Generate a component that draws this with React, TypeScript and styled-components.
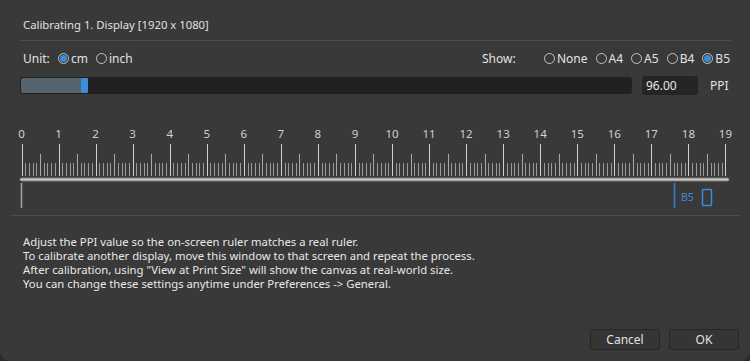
import React from "react";
import styled, { createGlobalStyle } from "styled-components";

const Global = createGlobalStyle`
  html, body { margin: 0; padding: 0; background: #2b2b2b; }
  body { font-family: "Noto Sans", "DejaVu Sans", sans-serif; }
`;

const Dialog = styled.div`
  width: 750px;
  height: 361px;
  background: #393939;
  border-radius: 0 0 10px 10px;
  display: flex;
  flex-direction: column;
  box-sizing: border-box;
  color: #e2e2e2;
  font-size: 12px;
  overflow: hidden;
`;

const Title = styled.div`
  margin: 17px 23px 0;
  line-height: 16px;
  font-size: 11.3px;
  color: #e0e0e0;
`;

const Separator = styled.div<{ $inset: number; $top: number }>`
  height: 1px;
  background: #4c4c4c;
  margin: ${(p) => p.$top}px ${(p) => p.$inset}px 0;
`;

const ControlsRow = styled.div`
  margin: 8px 20px 0 23px;
  height: 18px;
  display: flex;
  align-items: center;
`;

const Label = styled.span<{ $w?: number }>`
  width: ${(p) => (p.$w ? `${p.$w}px` : "auto")};
  flex: none;
`;

const RadioGroup = styled.div`
  display: flex;
  align-items: center;
  gap: 8px;
`;

const RadioItem = styled.label`
  display: flex;
  align-items: center;
  gap: 2px;
`;

const Circle = styled.span<{ $on: boolean }>`
  width: 11px;
  height: 11px;
  border-radius: 50%;
  border: 1px solid #c4c4c4;
  box-sizing: border-box;
  display: flex;
  align-items: center;
  justify-content: center;
  &::after {
    content: "";
    width: 7px;
    height: 7px;
    border-radius: 50%;
    background: #3b8ed6;
    display: ${(p) => (p.$on ? "block" : "none")};
  }
`;

const Spacer = styled.div`
  flex: 1;
`;

const SliderRow = styled.div`
  margin: 9px 0 0 20px;
  height: 19px;
  display: flex;
  align-items: center;
`;

const Track = styled.div`
  width: 612px;
  height: 17px;
  background: #212121;
  border-radius: 3px;
  display: flex;
  overflow: hidden;
`;

const Fill = styled.div`
  margin: 1px 0 1px 1px;
  background: #546570;
  border-radius: 2px 0 0 2px;
  display: flex;
  justify-content: flex-end;
`;

const Handle = styled.div`
  width: 7px;
  background: #3a8ed8;
  border-radius: 2px;
`;

const NumberBox = styled.div`
  margin-left: 10px;
  width: 56px;
  height: 19px;
  box-sizing: border-box;
  background: #252525;
  border-radius: 3px;
  padding-left: 4px;
  line-height: 19px;
  color: #e6e6e6;
`;

const Unit = styled.span`
  margin-left: 12px;
`;

const RulerSvg = styled.svg`
  display: block;
  width: 750px;
  height: 117px;
`;

const Description = styled.div`
  margin: 19px 23px 0;
  line-height: 14px;
  font-size: 11.3px;
  color: #e8e8e8;
`;

const Footer = styled.div`
  margin-top: auto;
  padding: 0 11px 11px 0;
  display: flex;
  justify-content: flex-end;
  gap: 9px;
`;

const Button = styled.button`
  width: 70px;
  height: 21px;
  background: #353535;
  border: 1px solid #262626;
  border-radius: 3px;
  color: #e2e2e2;
  font-family: inherit;
  font-size: 12px;
  padding: 0;
`;

const Radio = ({ label, on }: { label: string; on?: boolean }) => (
  <RadioItem>
    <Circle $on={!!on} />
    <span>{label}</span>
  </RadioItem>
);

const PX_CM = 37.05;
const X0 = 21.5;

const Ruler = () => {
  const ticks = [];
  for (let i = 0; i <= 190; i++) {
    const x = Math.round(X0 + (i * PX_CM) / 10) + 0.5;
    const y1 = i % 10 === 0 ? 144 : i % 5 === 0 ? 154 : 163;
    const c = i % 10 === 0 ? "#cfcfcf" : i % 5 === 0 ? "#a8a8a8" : "#9a9a9a";
    ticks.push(<line key={i} x1={x} x2={x} y1={y1} y2={176} stroke={c} strokeWidth={1} />);
  }
  const labels = [];
  for (let c = 0; c <= 19; c++) {
    labels.push(
      <text key={c} x={X0 + c * PX_CM} y={137.5} textAnchor="middle" fontSize={11.5} fill="#d0d0d0" fontFamily="Noto Sans, sans-serif">
        {c}
      </text>
    );
  }
  const b5 = Math.round(X0 + 17.6 * PX_CM) + 0.5;
  return (
    <RulerSvg viewBox="0 95 750 117">
      {labels}
      {ticks}
      <rect x={20} y={178} width={709} height={3} rx={1.5} fill="#c9c9c9" stroke="#7c7c7c" strokeWidth={1} />
      <line x1={21.5} x2={21.5} y1={183} y2={208} stroke="#a0a0a0" strokeWidth={1.6} />
      <line x1={b5} x2={b5} y1={183} y2={208} stroke="#2e80c8" strokeWidth={1.6} />
      <text x={681} y={201} fontSize={10.5} fill="#3a8ed8" fontFamily="Noto Sans, sans-serif">B5</text>
      <rect x={702.5} y={189.5} width={9} height={16} rx={1} fill="none" stroke="#3a8ed8" strokeWidth={1.5} />
    </RulerSvg>
  );
};

export default function App() {
  return (
    <>
      <Global />
      <Dialog>
        <Title>Calibrating 1. Display [1920 x 1080]</Title>
        <Separator $inset={19} $top={7} />
        <ControlsRow>
          <Label $w={35}>Unit:</Label>
          <RadioGroup>
            <Radio label="cm" on />
            <Radio label="inch" />
          </RadioGroup>
          <Spacer />
          <Label $w={62}>Show:</Label>
          <RadioGroup>
            <Radio label="None" />
            <Radio label="A4" />
            <Radio label="A5" />
            <Radio label="B4" />
            <Radio label="B5" on />
          </RadioGroup>
        </ControlsRow>
        <SliderRow>
          <Track>
            <Fill style={{ width: 67 }}>
              <Handle />
            </Fill>
          </Track>
          <NumberBox>96.00</NumberBox>
          <Unit>PPI</Unit>
        </SliderRow>
        <Ruler />
        <Separator $inset={10} $top={3} />
        <Description>
          Adjust the PPI value so the on-screen ruler matches a real ruler.
          <br />
          To calibrate another display, move this window to that screen and repeat the process.
          <br />
          After calibration, using "View at Print Size" will show the canvas at real-world size.
          <br />
          You can change these settings anytime under Preferences -&gt; General.
        </Description>
        <Footer>
          <Button>Cancel</Button>
          <Button>OK</Button>
        </Footer>
      </Dialog>
    </>
  );
}
